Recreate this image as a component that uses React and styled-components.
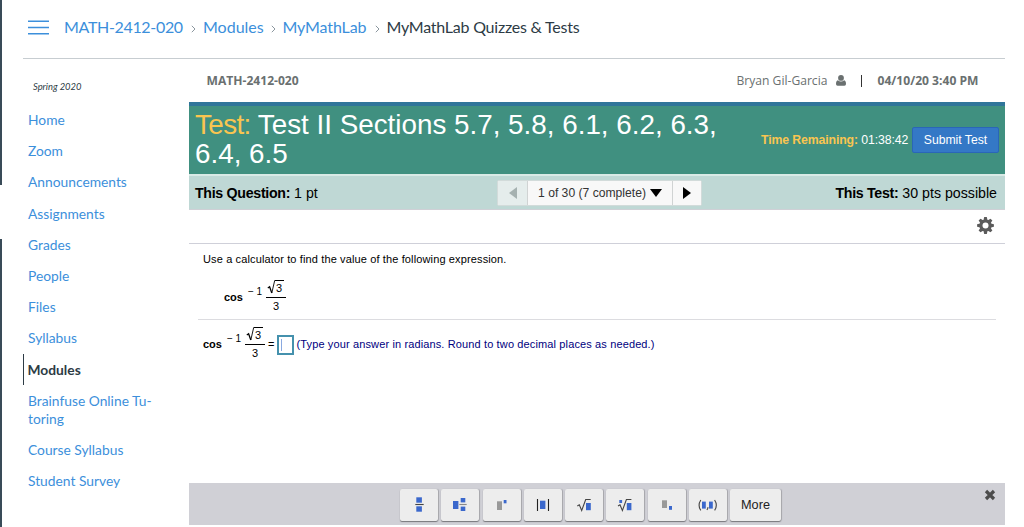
import React from "react";
import styled, { createGlobalStyle } from "styled-components";

const GlobalStyle = createGlobalStyle`
  * { box-sizing: border-box; }
  body { margin: 0; background: #fff; overflow: hidden; }
`;

const sans = `"Liberation Sans", Arial, sans-serif`;

const Page = styled.div`
  display: flex;
  width: 1024px;
  height: 527px;
  background: #fff;
  font-family: Lato, sans-serif;
`;

const Rail = styled.div`
  display: flex;
  flex-direction: column;
  gap: 54px;
  width: 2px;
  margin-right: 21px;
`;
const RailPart = styled.div`
  height: ${(p) => p.$height}px;
  background: #394b58;
`;

const Frame = styled.div`
  width: 982px;
  display: flex;
  flex-direction: column;
`;

const Header = styled.header`
  height: 59px;
  padding: 0 0 3px 5px;
  display: flex;
  align-items: center;
  border-bottom: 1px solid #c7cdd1;
`;
const MenuButton = styled.button`
  width: 21px;
  height: 15px;
  padding: 0;
  margin-right: 15px;
  border: 0;
  background: none;
  display: flex;
`;
const Crumb = styled.span`
  width: ${(p) => p.$width}px;
  margin-bottom: 2px;
  font-size: 16px;
  line-height: 24px;
  letter-spacing: ${(p) => p.$spacing || 0}px;
  white-space: nowrap;
  color: ${(p) => (p.$current ? "#2d3b45" : "#3c8fdb")};
`;
const Chevron = styled.svg`
  width: 5px;
  height: 8px;
  margin: 2px 7px 0 8px;
`;

const Body = styled.div`
  display: flex;
  height: 468px;
`;

const Sidebar = styled.nav`
  width: 166px;
  padding-top: 20px;
`;
const Term = styled.div`
  padding-left: 10px;
  height: 25px;
  font-size: 9.4px;
  line-height: 16px;
  font-style: italic;
  color: #2d3b45;
`;
const NavItem = styled.a`
  display: block;
  padding: 7px 0 6.25px ${(p) => (p.$active ? 3.5 : 5)}px;
  border-left: ${(p) => (p.$active ? "1.5px solid #2d3b45" : "0")};
  font-size: 13.8px;
  line-height: 17.95px;
  font-weight: ${(p) => (p.$active ? 700 : 400)};
  color: ${(p) => (p.$active ? "#2d3b45" : "#3c8fdb")};
  white-space: pre-line;
`;

const Main = styled.main`
  width: 816px;
  display: flex;
  flex-direction: column;
  font-family: ${sans};
`;
const CourseBar = styled.div`
  height: 43px;
  padding: 0 26px 0 17.5px;
  display: flex;
  align-items: center;
  font-family: "Open Sans", sans-serif;
  font-size: 12px;
  color: #6a7070;
`;
const CourseName = styled.b`
  flex: 1;
  font-size: 12.1px;
`;
const UserName = styled.span`
  font-size: 12.1px;
  width: 99px;
  white-space: nowrap;
`;
const Divider = styled.span`
  width: 1px;
  height: 12px;
  margin: 0 16px 0 15px;
  background: #333;
`;
const Stamp = styled.b`
  font-size: 12.1px;
  white-space: nowrap;
  width: 101.5px;
`;

const TestBanner = styled.section`
  height: 74px;
  padding: 0 6px;
  display: flex;
  align-items: center;
  background: #409080;
  border-top: 4px solid #30759a;
  border-bottom: 2px solid #d9eae6;
  color: #fff;
`;
const TestTitle = styled.h1`
  margin: 0 0 2px;
  width: 566px;
  font-size: 27.8px;
  line-height: 29px;
  font-weight: 400;
  white-space: nowrap;
`;
const Gold = styled.span`
  color: #f9c550;
  letter-spacing: ${(p) => p.$spacing || 0}px;
`;
const Time = styled.div`
  width: 151px;
  font-size: 12.3px;
  white-space: nowrap;
  letter-spacing: -0.1px;
`;
const Submit = styled.button`
  width: 87px;
  height: 26px;
  padding: 0;
  border: 1px solid #2a66b8;
  border-radius: 2px;
  background: #3478c6;
  color: #fff;
  font: 12.2px ${sans};
`;

const QuestionBar = styled.section`
  height: 34px;
  padding: 0 8px 0 6px;
  display: flex;
  align-items: center;
  background: #bfd8d5;
  border-bottom: 1px solid #cfd0d6;
  font-size: 14.2px;
  color: #000;
`;
const Side = styled.div`
  width: ${(p) => p.$width}px;
  text-align: ${(p) => p.$align || "left"};
  white-space: nowrap;

  b { letter-spacing: -0.3px; }
`;
const Pager = styled.div`
  width: 205px;
  height: 26px;
  display: flex;
  border-radius: 2px;
  background: #f8f8f8;
  border: 1px solid #d2dbda;
`;
const PagerCell = styled.button`
  width: ${(p) => p.$width}px;
  padding: 0;
  display: flex;
  align-items: center;
  justify-content: center;
  gap: 4px;
  border: 0;
  border-left: ${(p) => (p.$first ? "0" : "1px solid #d0d3d3")};
  background: ${(p) => (p.$first ? "#e5edec" : "#f8f8f8")};
  font: 12.15px ${sans};
  color: #333;
  white-space: nowrap;
`;

const Tools = styled.div`
  height: 34px;
  padding: 0 11px 2px 0;
  display: flex;
  align-items: center;
  justify-content: flex-end;
  border-bottom: 1px solid #cfd0d9;
`;
const Question = styled.section`
  flex: 1;
  padding: 7px 9px 0;
  font-size: 11px;
  color: #000;
`;
const Prompt = styled.p`
  margin: 0 0 0 5px;
  line-height: 16px;
  letter-spacing: 0.13px;
  white-space: nowrap;
`;
const MathRow = styled.div`
  display: flex;
  align-items: flex-start;
  height: ${(p) => p.$height}px;
  padding: ${(p) => p.$top}px 0 0 ${(p) => p.$indent}px;
  line-height: 12px;
`;
const Cos = styled.b`
  width: 24px;
  padding-top: 11px;
`;
const Power = styled.span`
  width: 18px;
  padding-top: 6px;
  font-size: 10px;
  white-space: nowrap;
`;
const Fraction = styled.span`
  width: 20px;
  display: flex;
  flex-direction: column;
  align-items: center;
`;
const Radical = styled.span`
  display: flex;
  align-items: flex-end;
  height: 18px;
  width: 20px;
  padding: 0 0 1px 1px;
  border-bottom: 1px solid #000;
`;
const RadicalSign = styled.svg`
  width: 8px;
  height: 16px;
`;
const Radicand = styled.span`
  border-top: 1px solid #000;
  height: 16px;
  width: 9px;
  padding: 1px 0 0 1px;
`;
const Denominator = styled.span`
  padding-top: 2px;
`;
const Equals = styled.span`
  padding: 11px 0 0 3px;
  width: 12px;
`;
const Answer = styled.input`
  width: 17px;
  height: 20px;
  margin-top: 8px;
  border: 2px solid #4591ad;
  outline: 0;
  background: linear-gradient(#8aa9e0, #8aa9e0) 2px 2px / 1px 12px no-repeat #fff;
`;
const Hint = styled.span`
  padding: 11px 0 0 2.5px;
  color: #000080;
  letter-spacing: 0.13px;
  white-space: nowrap;
`;
const Rule = styled.hr`
  margin: 0;
  border: 0;
  height: 1px;
  background: #dcdce0;
`;

const Palette = styled.footer`
  height: 42px;
  margin-bottom: 2px;
  padding: 6px 9px 0 211px;
  display: flex;
  align-items: flex-start;
  gap: 3.25px;
  background: #d0d0d6;
`;
const Key = styled.button`
  width: ${(p) => p.$width || 38}px;
  height: 32px;
  padding: 0;
  flex: none;
  border: 0;
  border-radius: 2px;
  background: #ededed;
  box-shadow: 0 1px 1px #77777b, 1px 0 1px #aaaab0;
  font: 12.7px ${sans};
  color: #222;
`;
const KeyArt = styled.svg`
  display: block;
  width: 38px;
  height: 32px;
`;
const Spacer = styled.span`
  flex: 1;
`;

const blue = "#3b68cc";
const gray = "#999";
const Sq = ({ x, y, w, h, c = blue }) => <rect x={x} y={y} width={w} height={h} fill={c} />;
const Stroke = ({ d, c = "#444" }) => <path d={d} fill="none" stroke={c} strokeWidth="1.1" />;

const keys = [
  <><Sq x={16.3} y={8.3} w={5.6} h={5.4} /><Stroke d="M15.3 15.5h8.4" /><Sq x={16.3} y={17.3} w={5.6} h={5.4} /></>,
  <><Sq x={12} y={12} w={5.4} h={8} /><Stroke d="M18.3 15.5h7.4" c="#888" /><Sq x={19.7} y={9} w={4.6} h={4.4} /><Sq x={19.7} y={17.6} w={4.6} h={4.4} /></>,
  <><Sq x={14} y={12.3} w={5} h={8.7} c={gray} /><Sq x={20.7} y={11} w={2.8} h={3.3} /></>,
  <><Stroke d="M13.5 10v12M24.5 10v12" c="#222" /><Sq x={16} y={11.7} w={5.4} h={8.3} /></>,
  <><Stroke d="M12.3 17l2-1.2 2.4 5.7 4-11h5" /><Sq x={21} y={14} w={4.8} h={7.2} /></>,
  <><Sq x={13.3} y={11} w={2.8} h={3} /><Stroke d="M12 17l2-1.2 2.4 5.7 4-11h5" /><Sq x={20.8} y={14} w={4.6} h={7.2} /></>,
  <><Sq x={14} y={11.3} w={5} h={7.7} c={gray} /><Sq x={21} y={17} w={3} h={3.8} /></>,
  <><Stroke d="M11.8 11q-3.4 5.2 0 10.4M25.6 11q3.4 5.2 0 10.4" /><Sq x={13} y={12.6} w={3.8} h={7} /><Stroke d="M18.8 18.2q.3 1.6-1 2.6" /><Sq x={20} y={12.6} w={3.8} h={7} /></>,
];

const navItems = [
  "Home", "Zoom", "Announcements", "Assignments", "Grades", "People", "Files",
  "Syllabus", "Modules", "Brainfuse Online Tu-\ntoring", "Course Syllabus", "Student Survey",
];

const MenuIcon = () => (
  <svg width="21" height="15" viewBox="0 0 21 15">
    <path d="M0 1.300h21M0 7.500h21M0 13.700h21" stroke="#3c8fdb" strokeWidth="1.400" />
  </svg>
);

const CrumbArrow = () => (
  <Chevron viewBox="0 0 5 8"><path d="M.8.8 4 4 .8 7.2" fill="none" stroke="#8b969e" /></Chevron>
);

const UserIcon = () => (
  <svg width="10" height="11" viewBox="0 0 10 11" fill="#6a7070">
    <ellipse cx="5" cy="2.9" rx="2.9" ry="2.9" />
    <path d="M1.800 5.200Q5 7.800 8.200 5.200 10 5.600 10 9q0 1.700-1.600 1.700H1.600Q0 10.700 0 9 0 5.600 1.800 5.200z" />
  </svg>
);

const GearIcon = () => (
  <svg width="17" height="17" viewBox="-8.5 -8.5 17 17">
    <g fill="#5b5b5b">
      {[0, 45, 90, 135].map((a) => (
        <path key={a} transform={`rotate(${a})`} d="M-1.300-8.400h2.600l.7 3v10.800l-.7 3h-2.600l-.7-3V-5.400z" />
      ))}
      <circle r="6.1" />
    </g>
    <circle r="3" fill="#fff" />
  </svg>
);

const CloseIcon = () => (
  <svg width="12" height="12" viewBox="0 0 12 12">
    <path d="M2 2l8 8M10 2l-8 8" fill="none" stroke="#4c4c4c" strokeWidth="3.2" />
  </svg>
);

const Triangle = ({ d, w, h, c = "#000" }) => (
  <svg width={w} height={h} viewBox={`0 0 ${w} ${h}`}><path d={d} fill={c} /></svg>
);

const ArcCos = () => (
  <>
    <Cos>cos</Cos>
    <Power>− 1</Power>
    <Fraction>
      <Radical>
        <RadicalSign viewBox="0 0 8 16">
          <path d="M.8 8 2.6 6.8 4.8 13" fill="none" stroke="#000" strokeWidth="1.3" />
          <path d="M4.8 13 7.7.5H8" fill="none" stroke="#000" strokeWidth=".9" />
        </RadicalSign>
        <Radicand>3</Radicand>
      </Radical>
      <Denominator>3</Denominator>
    </Fraction>
  </>
);

export default function App() {
  return (
    <Page>
      <GlobalStyle />
      <Rail><RailPart $height={185} /><RailPart $height={288} /></Rail>
      <Frame>
        <Header>
          <MenuButton aria-label="Course menu"><MenuIcon /></MenuButton>
          <Crumb $width={119} $spacing={-0.33}>MATH-2412-020</Crumb>
          <CrumbArrow />
          <Crumb $width={59.5}>Modules</Crumb>
          <CrumbArrow />
          <Crumb $width={84} $spacing={-0.1}>MyMathLab</Crumb>
          <CrumbArrow />
          <Crumb $width={193} $spacing={-0.23} $current>MyMathLab Quizzes &amp; Tests</Crumb>
        </Header>
        <Body>
          <Sidebar>
            <Term>Spring 2020</Term>
            {navItems.map((t) => <NavItem key={t} $active={t === "Modules"}>{t}</NavItem>)}
          </Sidebar>
          <Main>
            <CourseBar>
              <CourseName>MATH-2412-020</CourseName>
              <UserName>Bryan Gil-Garcia</UserName>
              <UserIcon />
              <Divider />
              <Stamp>04/10/20 3:40 PM</Stamp>
            </CourseBar>
            <TestBanner>
              <TestTitle><Gold $spacing={-0.6}>Test: </Gold>Test II Sections 5.7, 5.8, 6.1, 6.2, 6.3,<br />6.4, 6.5</TestTitle>
              <Time><Gold as="b" $spacing={-0.13}>Time Remaining:</Gold> 01:38:42</Time>
              <Submit>Submit Test</Submit>
            </TestBanner>
            <QuestionBar>
              <Side $width={302}><b>This Question:</b> 1 pt</Side>
              <Pager>
                <PagerCell $width={29} $first aria-label="Previous"><Triangle w={8} h={12} d="M8 0v12L0 6z" c="#a5b1b0" /></PagerCell>
                <PagerCell $width={145}>1 of 30 (7 complete)<Triangle w={12} h={8} d="M0 0h12L6 8z" /></PagerCell>
                <PagerCell $width={29} aria-label="Next"><Triangle w={8} h={12} d="M0 0v12l8-6z" /></PagerCell>
              </Pager>
              <Side $width={295} $align="right"><b>This Test:</b> 30 pts possible</Side>
            </QuestionBar>
            <Tools><GearIcon /></Tools>
            <Question>
              <Prompt>Use a calculator to find the value of the following expression.</Prompt>
              <MathRow $height={52} $top={13} $indent={26}><ArcCos /></MathRow>
              <Rule />
              <MathRow $height={50} $top={7} $indent={5}>
                <ArcCos />
                <Equals>=</Equals>
                <Answer aria-label="Answer" />
                <Hint>(Type your answer in radians. Round to two decimal places as needed.)</Hint>
              </MathRow>
            </Question>
            <Palette>
              {keys.map((art, i) => <Key key={i}><KeyArt viewBox="0 0 38 32">{art}</KeyArt></Key>)}
              <Key $width={51}>More</Key>
              <Spacer />
              <CloseIcon />
            </Palette>
          </Main>
        </Body>
      </Frame>
    </Page>
  );
}
